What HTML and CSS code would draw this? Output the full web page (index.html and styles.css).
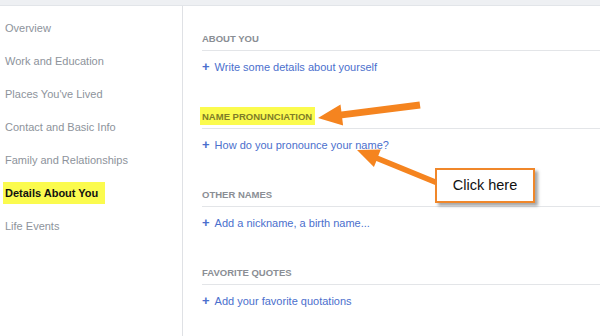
FILE: index.html
```html
<!DOCTYPE html>
<html lang="en">
<head>
    <meta charset="UTF-8">
    <meta name="viewport" content="width=device-width, initial-scale=1.0">
    <title>Details About You</title>
    <link rel="stylesheet" href="styles.css">
</head>
<body>
    <div class="topbar"></div>

    <div class="page">
        <ul class="sidebar">
            <li>Overview</li>
            <li>Work and Education</li>
            <li>Places You've Lived</li>
            <li>Contact and Basic Info</li>
            <li>Family and Relationships</li>
            <li class="active"><span class="mark">Details About You</span></li>
            <li>Life Events</li>
        </ul>

        <div class="content">
            <div class="section">
                <div class="heading">ABOUT YOU</div>
                <a class="add" href="#"><span class="plus">+</span>Write some details about yourself</a>
            </div>
            <div class="section">
                <div class="heading"><span class="mark">NAME PRONUNCIATION</span></div>
                <a class="add" href="#"><span class="plus">+</span>How do you pronounce your name?</a>
            </div>
            <div class="section">
                <div class="heading">OTHER NAMES</div>
                <a class="add" href="#"><span class="plus">+</span>Add a nickname, a birth name...</a>
            </div>
            <div class="section">
                <div class="heading">FAVORITE QUOTES</div>
                <a class="add" href="#"><span class="plus">+</span>Add your favorite quotations</a>
            </div>
        </div>
    </div>

    <!-- annotation arrows drawn over the page -->
    <svg class="arrows" width="600" height="336" viewBox="0 0 600 336">
        <polygon points="419.5,101.5 341.4,111.6 340.5,104.5 318,118 343.1,125.4 342.2,118.3 420.5,108.5" />
        <polygon points="441.2,181.4 378.3,155.8 380.8,149.5 357,150 373.9,167 376.4,160.9 438.8,186.6" />
    </svg>
    <div class="callout">Click here</div>
</body>
</html>
```

FILE: styles.css
```css
* { box-sizing: border-box; }

body {
    margin: 0;
    width: 600px;
    height: 336px;
    overflow: hidden;
    position: relative;
    background: #fff;
    font-family: "Liberation Sans", Arial, sans-serif;
}

.topbar {
    height: 6px;
    background: #eef0f3;
    border-bottom: 1px solid #e2e5e9;
}

.page {
    display: flex;
    height: 330px;
}

.sidebar {
    list-style: none;
    margin: 0;
    padding: 6px 0 0 0;
    width: 183px;
    border-right: 1px solid #dfe1e5;
    flex-shrink: 0;
}

.sidebar li {
    height: 33px;
    line-height: 33px;
    padding-left: 5px;
    font-size: 11px;
    color: #8d939b;
}

.sidebar li.active {
    color: #111;
    font-weight: bold;
}

.sidebar li.active .mark {
    display: inline-block;
    line-height: 14px;
    padding: 4px 7px 4px 2px;
    margin-left: -2px;
}

.mark {
    background: #fbfb4e;
}

.content {
    flex: 1;
    padding: 26px 0 0 19px;
}

.section {
    margin-bottom: 36px;
}

.heading {
    font-size: 9.5px;
    font-weight: bold;
    line-height: 14px;
    color: #8a8e94;
    padding-bottom: 4px;
    border-bottom: 1px solid #e3e5e8;
}

.heading .mark {
    display: inline-block;
    color: #7f7d28;
    padding: 3px 3px 1px 2px;
    margin: -3px -3px -1px -2px;
}

.add {
    display: block;
    margin-top: 9px;
    line-height: 14px;
    font-size: 11px;
    color: #4b6fcd;
    text-decoration: none;
}

.plus {
    font-size: 13px;
    font-weight: bold;
    margin-right: 5px;
}

.arrows {
    position: absolute;
    left: 0;
    top: 0;
}

.arrows polygon {
    fill: #f5841f;
}

.callout {
    position: absolute;
    left: 435px;
    top: 168px;
    width: 100px;
    height: 35px;
    background: #fff;
    border: 2px solid #f0872a;
    box-shadow: 3px 3px 3px rgba(0, 0, 0, 0.35);
    font-size: 14.5px;
    line-height: 31px;
    text-align: center;
    color: #111;
}
```
